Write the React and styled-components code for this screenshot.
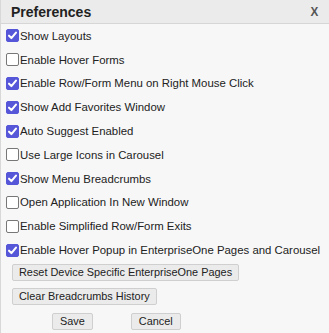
import React from 'react'
import styled, { createGlobalStyle } from 'styled-components'

const GlobalStyle = createGlobalStyle`
  html, body {
    margin: 0;
    padding: 0;
    background: #f7f7f7;
  }
  body {
    font-family: "Liberation Sans", Arial, sans-serif;
  }
`

const options = [
  { label: 'Show Layouts', checked: true },
  { label: 'Enable Hover Forms', checked: false },
  { label: 'Enable Row/Form Menu on Right Mouse Click', checked: true },
  { label: 'Show Add Favorites Window', checked: true },
  { label: 'Auto Suggest Enabled', checked: true },
  { label: 'Use Large Icons in Carousel', checked: false },
  { label: 'Show Menu Breadcrumbs', checked: true },
  { label: 'Open Application In New Window', checked: false },
  { label: 'Enable Simplified Row/Form Exits', checked: false },
  { label: 'Enable Hover Popup in EnterpriseOne Pages and Carousel', checked: true },
]

const Check = ({ checked }) => (
  <Box $checked={checked}>
    {checked && (
      <svg width="11" height="11" viewBox="0 0 12 12">
        <path d="M2.2 6.2 L4.8 8.8 L9.8 2.8" fill="none" stroke="#fff" strokeWidth="2.2" strokeLinecap="round" strokeLinejoin="round" />
      </svg>
    )}
  </Box>
)

const App = () => {
  return (
    <Dialog>
      <GlobalStyle />
      <Header>
        <Title>Preferences</Title>
        <Close>X</Close>
      </Header>
      <Body>
        {options.map((o) => (
          <Row key={o.label}>
            <Check checked={o.checked} />
            <Label>{o.label}</Label>
          </Row>
        ))}
        <Actions>
          <Button>Reset Device Specific EnterpriseOne Pages</Button>
          <Button>Clear Breadcrumbs History</Button>
        </Actions>
        <Footer>
          <Button>Save</Button>
          <Button>Cancel</Button>
        </Footer>
      </Body>
    </Dialog>
  )
}

const Dialog = styled.div`
  width: 329px;
  height: 333px;
  background: #f7f7f7;
  border-left: 1px solid #d8d8d8;
  box-sizing: border-box;
  overflow: hidden;
`
const Header = styled.div`
  height: 23px;
  display: flex;
  align-items: center;
  justify-content: space-between;
  padding: 0 10px 0 10px;
  background: #ebebeb;
  border-bottom: 1px solid #d6d6d6;
`
const Title = styled.div`
  font-size: 14px;
  font-weight: bold;
  color: #222;
`
const Close = styled.div`
  font-size: 13px;
  font-weight: bold;
  color: #555;
  transform: scaleX(0.9);
`
const Body = styled.div`
  padding: 0 0 0 5px;
`
const Row = styled.div`
  height: 23.8px;
  display: flex;
  align-items: center;
`
const Box = styled.span`
  width: 13px;
  height: 13px;
  box-sizing: border-box;
  border-radius: 2px;
  display: flex;
  align-items: center;
  justify-content: center;
  background: ${(p) => (p.$checked ? '#5657d8' : '#fff')};
  border: 1px solid ${(p) => (p.$checked ? '#5657d8' : '#777')};
  margin-right: 1px;
`
const Label = styled.span`
  font-size: 11.4px;
  color: #222;
`
const Actions = styled.div`
  display: flex;
  flex-direction: column;
  align-items: flex-start;
  gap: 7px;
  padding: 2px 0 0 6px;
`
const Button = styled.button`
  font-family: "Liberation Sans", Arial, sans-serif;
  font-size: 10.9px;
  color: #222;
  background: #ebebeb;
  border: 1px solid #cfcfcf;
  border-radius: 2px;
  height: 17px;
  margin: 0;
  padding: 0 6px;
  line-height: 15px;
`
const Footer = styled.div`
  display: flex;
  gap: 38px;
  padding: 8px 0 0 46px;
  ${Button} {
    padding: 0 7px;
  }
`

export default App
